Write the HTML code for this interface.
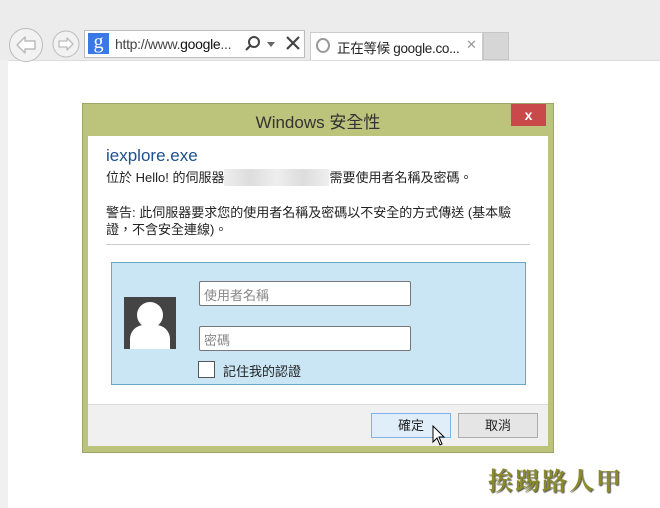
<!DOCTYPE html>
<html><head><meta charset="utf-8"><style>
*{margin:0;padding:0;box-sizing:border-box}
body{width:660px;height:508px;position:relative;overflow:hidden;background:#fff;font-family:"Liberation Sans","Noto Sans CJK TC",sans-serif;font-size:13px;color:#222}
.a{position:absolute}
</style></head><body>
<div class="a" style="left:0;top:0;width:660px;height:60px;background:#ececec"></div>
<div class="a" style="left:0;top:60px;width:8px;height:448px;background:#f0f0f0"></div>
<div class="a" style="left:8px;top:60px;width:652px;height:1px;background:#ddd"></div>
<!-- back/forward -->
<svg class="a" style="left:8px;top:27px" width="80" height="38">
<circle cx="18" cy="18" r="16.5" fill="#f2f2f2" stroke="#bbb"/>
<path d="M9 18 L17 10 L17 14 L27 14 L27 22 L17 22 L17 26 Z" fill="#fff" stroke="#bbb" stroke-width="1.5" stroke-linejoin="round"/>
<circle cx="58" cy="17" r="13" fill="#f2f2f2" stroke="#bbb"/>
<path d="M65 17 L59 11 L59 14 L51 14 L51 20 L59 20 L59 23 Z" fill="#fff" stroke="#bbb" stroke-width="1.3" stroke-linejoin="round"/>
</svg>
<!-- address -->
<div class="a" style="left:84px;top:30px;width:221px;height:28px;border:1px solid #bbb;background:#fff"></div>
<div class="a" style="left:88px;top:33px;width:21px;height:21px;background:#3b78e7;color:#fff;font-family:'Liberation Serif',serif;font-size:20px;text-align:center;line-height:19px">g</div>
<div class="a" style="left:115px;top:36px;font-size:14px;color:#444;letter-spacing:-0.3px">http://www.<span style="color:#111">google</span>...</div>
<svg class="a" style="left:244px;top:35px" width="18" height="18"><circle cx="10" cy="7" r="5" fill="none" stroke="#444" stroke-width="2"/><path d="M6.5 10.5 L2 15" stroke="#444" stroke-width="2.2"/></svg>
<svg class="a" style="left:267px;top:42px" width="8" height="5"><path d="M0 0 L8 0 L4 5Z" fill="#666"/></svg>
<svg class="a" style="left:286px;top:36px" width="14" height="14"><path d="M1 1 L13 13 M13 1 L1 13" stroke="#444" stroke-width="2.2"/></svg>
<!-- tab -->
<div class="a" style="left:310px;top:32px;width:173px;height:28px;background:#fff;border:1px solid #ccc;border-bottom:none"></div>
<div class="a" style="left:316px;top:38px;width:14px;height:15px;border:2px solid #999;border-radius:50%"></div>
<div class="a" style="left:337px;top:37px;font-size:13.5px;color:#222;letter-spacing:-0.3px">正在等候 google.co...</div>
<div class="a" style="left:466px;top:37px;font-size:13px;color:#999">✕</div>
<div class="a" style="left:483px;top:32px;width:26px;height:28px;background:#d6d6d6;border:1px solid #c6c6c6"></div>
<!-- dialog -->
<div class="a" style="left:82px;top:103px;width:472px;height:350px;background:#bcc47c;border:1px solid #9ea46a"></div>
<div class="a" style="left:82px;top:108px;width:472px;text-align:center;font-size:17px;color:#333">Windows 安全性</div>
<div class="a" style="left:511px;top:104px;width:35px;height:22px;background:#c9484a;color:#fff;text-align:center;font-size:14px;line-height:22px;font-weight:bold">x</div>
<div class="a" style="left:88px;top:136px;width:460px;height:268px;background:#fff"></div>
<div class="a" style="left:88px;top:404px;width:460px;height:42px;background:#f0f0f0;border-top:1px solid #dcdcdc"></div>
<div class="a" style="left:106px;top:146px;font-size:17px;color:#1e4f8e">iexplore.exe</div>
<div class="a" style="left:106px;top:167px;font-size:13px">位於 Hello! 的伺服器<span style="display:inline-block;width:105px;height:17px;vertical-align:-4px;background:linear-gradient(90deg,#eee,#ddd,#eee,#ddd,#eee)"></span>需要使用者名稱及密碼。</div>
<div class="a" style="left:106px;top:204px;font-size:13px;line-height:17px;width:430px">警告: 此伺服器要求您的使用者名稱及密碼以不安全的方式傳送 (基本驗<br>證，不含安全連線)。</div>
<div class="a" style="left:106px;top:244px;width:424px;height:1px;background:#ccc"></div>
<!-- blue area -->
<div class="a" style="left:111px;top:262px;width:415px;height:123px;background:#cae6f4;border:1px solid #6aa6c8"></div>
<div class="a" style="left:124px;top:297px;width:52px;height:52px;background:#444;overflow:hidden">
<div class="a" style="left:13px;top:5px;width:26px;height:26px;border-radius:50%;background:#fff"></div>
<div class="a" style="left:6px;top:28px;width:40px;height:30px;border-radius:14px 14px 0 0;background:#fff"></div>
</div>
<div class="a" style="left:199px;top:281px;width:212px;height:25px;background:#fff;border:1px solid #777;border-radius:2px;padding:3px 4px;color:#888;font-size:13px">使用者名稱</div>
<div class="a" style="left:199px;top:326px;width:212px;height:25px;background:#fff;border:1px solid #777;border-radius:2px;padding:3px 4px;color:#888;font-size:13px">密碼</div>
<div class="a" style="left:198px;top:361px;width:17px;height:17px;background:#fff;border:1px solid #555"></div>
<div class="a" style="left:223px;top:361px;font-size:13px">記住我的認證</div>
<!-- buttons -->
<div class="a" style="left:371px;top:413px;width:80px;height:25px;background:#e0eef9;border:1px solid #7eb4ea;text-align:center;line-height:23px">確定</div>
<div class="a" style="left:458px;top:413px;width:80px;height:25px;background:#e5e5e5;border:1px solid #acacac;text-align:center;line-height:23px">取消</div>
<svg class="a" style="left:432px;top:425px" width="14" height="22"><path d="M1 1 L1 17 L5 13 L8 20 L10 19 L7 12 L12 12 Z" fill="#fff" stroke="#000"/></svg>
<!-- watermark -->
<div class="a" style="left:488px;top:462px;font-family:'Noto Serif CJK SC',serif;font-weight:bold;font-size:25px;letter-spacing:2px;color:#8a8a2a;text-shadow:1px 1px 1px #555">挨踢路人甲</div>
</body></html>
